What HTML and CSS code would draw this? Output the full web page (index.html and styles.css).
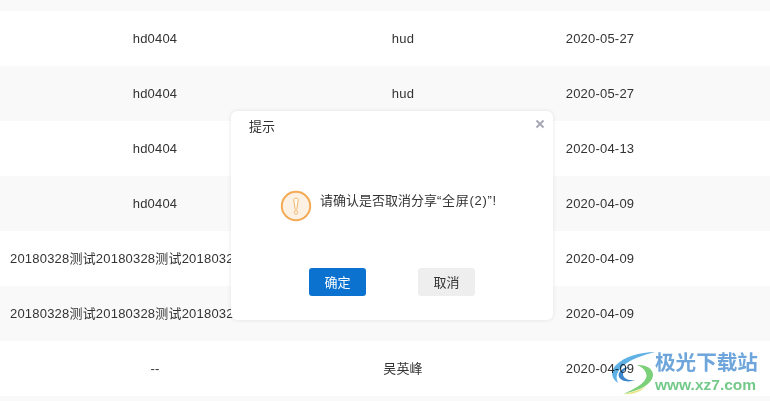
FILE: index.html
```html
<!DOCTYPE html>
<html lang="zh-CN">
<head>
<meta charset="utf-8">
<title>提示</title>
<link rel="stylesheet" href="styles.css">
</head>
<body>
<div class="table">
  <div class="row alt spacer"></div>
  <div class="row"><div class="cell">hd0404</div><div class="cell">hud</div><div class="cell">2020-05-27</div></div>
  <div class="row alt"><div class="cell">hd0404</div><div class="cell">hud</div><div class="cell">2020-05-27</div></div>
  <div class="row"><div class="cell">hd0404</div><div class="cell"></div><div class="cell">2020-04-13</div></div>
  <div class="row alt"><div class="cell">hd0404</div><div class="cell"></div><div class="cell">2020-04-09</div></div>
  <div class="row"><div class="cell cell-long">20180328测试20180328测试2018032</div><div class="cell"></div><div class="cell">2020-04-09</div></div>
  <div class="row alt"><div class="cell cell-long">20180328测试20180328测试2018032</div><div class="cell"></div><div class="cell">2020-04-09</div></div>
  <div class="row"><div class="cell">--</div><div class="cell">吴英峰</div><div class="cell">2020-04-09</div></div>
  <div class="row alt spacer"></div>
</div>

<div class="dialog">
  <div class="dialog-head">
    <span class="dialog-title">提示</span>
    <svg class="dialog-close" width="10" height="10" viewBox="0 0 10 10"><path d="M1.5 1.5 8.5 8.5M8.5 1.5 1.5 8.5" stroke="#a4a8b4" stroke-width="1.9" fill="none"/></svg>
  </div>
  <div class="dialog-body">
    <svg class="warn" width="32" height="32" viewBox="0 0 32 32">
      <circle cx="16" cy="16" r="14.2" fill="#fdf1e3" stroke="#f3ab56" stroke-width="2"/>
      <path d="M13.6 9.4c0-1.6 4.8-1.6 4.8 0L16.9 18.8c-.2.8-1.6.8-1.8 0Z" fill="#fdf8f0" stroke="#f3b670" stroke-width="1"/>
      <circle cx="16" cy="22.4" r="1.8" fill="#fdf8f0" stroke="#f3b670" stroke-width="1"/>
    </svg>
    <span class="message">请确认是否取消分享<span class="message-tail">“全屏(2)”!</span></span>
  </div>
  <div class="dialog-foot">
    <button class="btn primary">确定</button>
    <button class="btn">取消</button>
  </div>
</div>

<div class="mark">
  <svg class="mark-logo" width="45" height="45" viewBox="0 0 45 45">
    <path d="M45 2C30 2 14 7 6 15 1 20 0 28 8 33 5 27 7 21 13 16 21 9 33 5 45 2Z" fill="#5fb0e5"/>
    <path d="M20 17C13 17 7 22 9 27 11 31 18 33 25 30 18 31 13 28 13 24 13 21 16 18 20 17Z" fill="#3d86cc"/>
    <path d="M27 15C38 14 46 21 42 29 38 37 26 41 13 44 24 39 33 35 36 28 38 23 34 18 27 15Z" fill="#7dd07a"/>
    <path d="M14 44C22 42 30 40 36 36 31 42 22 45 14 44Z" fill="#e9e68a"/>
  </svg>
  <div class="mark-text">
    <div class="mark-name">极光下载站</div>
    <div class="mark-url">www.xz7.com</div>
  </div>
</div>
</body>
</html>
```
FILE: styles.css
```css
html, body {
  margin: 0;
  padding: 0;
  width: 770px;
  height: 401px;
  overflow: hidden;
  background: #fff;
  font-family: "Liberation Sans", "Noto Sans CJK SC", sans-serif;
  color: #333;
}

.table {
  display: flex;
  flex-direction: column;
}

.row {
  display: grid;
  grid-template-columns: 310px 186px 208px 66px;
  height: 55px;
  flex: none;
  background: #fff;
}

.row.alt {
  background: #f9f9f9;
}

.row.spacer {
  height: 11px;
}

.cell {
  padding: 0 10px;
  line-height: 55px;
  font-size: 13px;
  letter-spacing: 0.2px;
  text-align: center;
  white-space: nowrap;
  overflow: hidden;
}

.cell-long {
  text-align: left;
}

.dialog {
  position: absolute;
  left: 231px;
  top: 111px;
  width: 322px;
  height: 209px;
  background: #fff;
  border-radius: 6px;
  box-shadow: 0 0 4px rgba(0, 0, 0, 0.1);
  display: flex;
  flex-direction: column;
}

.dialog-head {
  display: flex;
  justify-content: space-between;
  padding: 7px 8px 0 18px;
  height: 46px;
  box-sizing: border-box;
}

.dialog-title {
  font-size: 13px;
  line-height: 17px;
}

.dialog-close {
  margin-top: 1px;
}

.dialog-body {
  display: flex;
  align-items: flex-start;
  gap: 8px;
  padding: 33px 0 0 49px;
  height: 111px;
  box-sizing: border-box;
}

.message {
  font-size: 13px;
  line-height: 17px;
  margin-top: 2px;
  white-space: nowrap;
}

.message-tail {
  letter-spacing: 0.7px;
}

.dialog-foot {
  display: flex;
  gap: 52px;
  padding-left: 78px;
}

.btn {
  width: 57px;
  height: 28px;
  padding: 0 0 1px;
  box-sizing: border-box;
  border: 0;
  border-radius: 3px;
  background: #eeeeee;
  color: #333;
  font: 13px "Liberation Sans", "Noto Sans CJK SC", sans-serif;
}

.btn.primary {
  background: #0c72cf;
  color: #fff;
}

.mark {
  position: absolute;
  left: 610px;
  top: 350px;
  display: flex;
  align-items: flex-start;
  mix-blend-mode: multiply;
}

.mark-logo {
  flex: none;
}

.mark-text {
  padding-top: 1px;
}

.mark-name {
  font-size: 20.6px;
  line-height: 23px;
  font-weight: 700;
  color: #6ea6dc;
  white-space: nowrap;
}

.mark-url {
  font-size: 15.5px;
  line-height: 20px;
  margin-top: 1px;
  font-weight: 700;
  color: #74c98a;
  white-space: nowrap;
}
```
